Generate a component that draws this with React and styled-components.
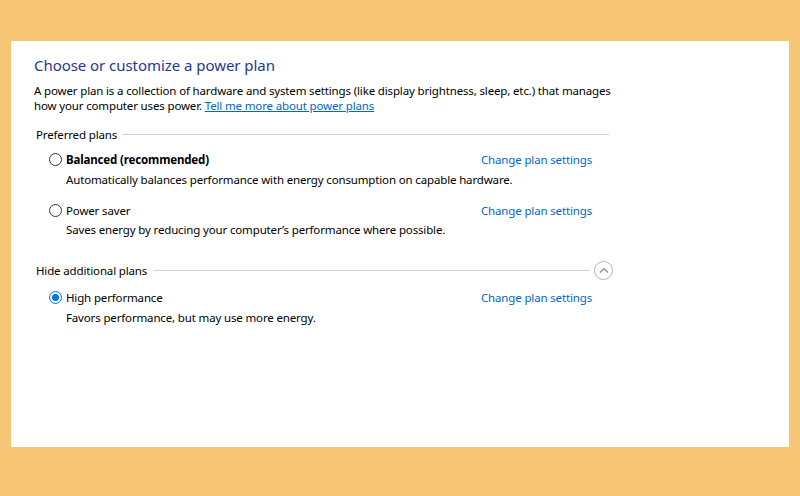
import React from 'react'
import styled, { createGlobalStyle } from 'styled-components'

const GlobalStyle = createGlobalStyle`
body{
    margin:0;
    background:#f7c576;
    font-family:"Segoe UI", "Noto Sans", sans-serif;
    color:#000;
}
`
const Page = styled.div`
height:496px;
box-sizing:border-box;
padding:41px 11px 49px;
display:flex;
`
const Panel = styled.div`
flex:1;
background:#fff;
padding:14px 0 0 23px;
`
const Title = styled.h1`
margin:0;
font-size:15px;
letter-spacing:-0.05px;
line-height:20px;
font-weight:400;
color:#1e3896;
`
const Intro = styled.p`
margin:8px 0 0;
width:590px;
font-size:11.5px;
letter-spacing:-0.15px;
line-height:15px;
`
const Link = styled.a`
color:#0066cc;
text-decoration:${props => props.underline ? 'underline' : 'none'};
cursor:pointer;
`
const Group = styled.div`
width:577px;
margin:${props => props.top}px 0 0 2px;
`
const GroupHeader = styled.div`
display:flex;
align-items:center;
height:${props => props.tall ? 18 : 15}px;
font-size:11.5px;
letter-spacing:-0.15px;
`
const Rule = styled.div`
flex:1;
height:1px;
background:#d0d0d0;
margin:0 ${props => props.end}px 0 6px;
`
const ToggleButton = styled.div`
width:17px;
height:17px;
border:1px solid #b4b4b4;
border-radius:50%;
display:flex;
align-items:center;
justify-content:center;
`
const Plan = styled.div`
display:grid;
grid-template-columns:17px 1fr auto;
row-gap:${props => props.gap}px;
padding:0 21px 0 13px;
margin-top:${props => props.top}px;
font-size:11.5px;
letter-spacing:-0.15px;
line-height:15px;
`
const Radio = styled.span`
width:13px;
height:13px;
box-sizing:border-box;
border:1px solid ${props => props.checked ? '#0078d7' : '#333'};
border-radius:50%;
align-self:center;
display:flex;
align-items:center;
justify-content:center;
&::after{
    content:'';
    width:7px;
    height:7px;
    border-radius:50%;
    background:${props => props.checked ? '#0078d7' : 'transparent'};
}
`
const PlanName = styled.span`
font-weight:${props => props.bold ? 700 : 400};
`
const PlanDesc = styled.span`
grid-column:2 / 4;
`

const PlanRow = ({ name, desc, bold, checked, top, gap }) => (
    <Plan top={top} gap={gap}>
        <Radio checked={checked} />
        <PlanName bold={bold}>{name}</PlanName>
        <Link>Change plan settings</Link>
        <PlanDesc>{desc}</PlanDesc>
    </Plan>
)

const App = () => (
    <Page>
        <GlobalStyle />
        <Panel>
            <Title>Choose or customize a power plan</Title>
            <Intro>
                A power plan is a collection of hardware and system settings (like display brightness, sleep, etc.) that manages how your computer uses power. <Link underline>Tell me more about power plans</Link>
            </Intro>
            <Group top={14}>
                <GroupHeader>
                    Preferred plans
                    <Rule end={4} />
                </GroupHeader>
                <PlanRow top={10} gap={5} bold checked={false}
                    name="Balanced (recommended)"
                    desc="Automatically balances performance with energy consumption on capable hardware." />
                <PlanRow top={16} gap={4} checked={false}
                    name="Power saver"
                    desc="Saves energy by reducing your computer’s performance where possible." />
            </Group>
            <Group top={24}>
                <GroupHeader tall>
                    Hide additional plans
                    <Rule end={4} />
                    <ToggleButton>
                        <svg width="10" height="6" viewBox="0 0 10 6">
                            <path d="M1 5.5 L5 1.5 L9 5.5" fill="none" stroke="#8a8a8a" strokeWidth="1.2" />
                        </svg>
                    </ToggleButton>
                </GroupHeader>
                <PlanRow top={11} gap={5} checked
                    name="High performance"
                    desc="Favors performance, but may use more energy." />
            </Group>
        </Panel>
    </Page>
)

export default App
